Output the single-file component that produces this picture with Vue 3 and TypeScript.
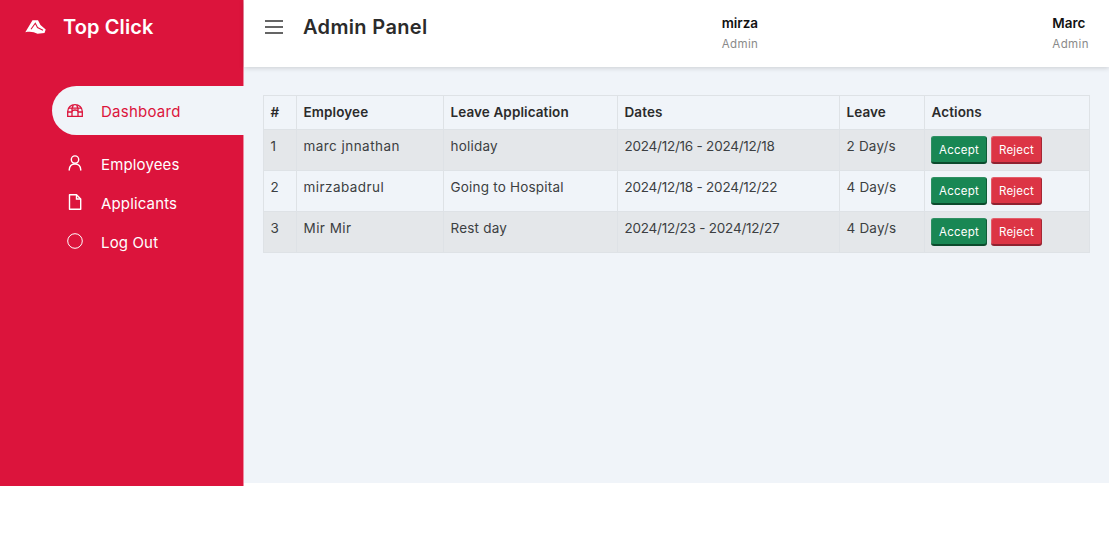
<script setup lang="ts">
type LeaveRow = {
  id: number
  employee: string
  reason: string
  dates: string
  days: string
}

const rows: LeaveRow[] = [
  { id: 1, employee: 'marc jnnathan', reason: 'holiday', dates: '2024/12/16 - 2024/12/18', days: '2 Day/s' },
  { id: 2, employee: 'mirzabadrul', reason: 'Going to Hospital', dates: '2024/12/18 - 2024/12/22', days: '4 Day/s' },
  { id: 3, employee: 'Mir Mir', reason: 'Rest day', dates: '2024/12/23 - 2024/12/27', days: '4 Day/s' }
]
</script>

<template>
  <div class="layout">
    <aside class="sidebar">
      <div class="brand">
        <svg class="brand__logo" viewBox="0 0 21 14" aria-hidden="true">
          <path d="M0.3 12.2L7.5 0.3H13L15.5 5L20.7 9.5L19.5 13L12.5 13.7C9 11.8 5 11.2 0.3 12.2Z" fill="#fff" />
          <path d="M6 9.3L10.3 3.3L12.5 7.5L18 10.2" fill="none" stroke="#dc143c" stroke-width="1.1" />
        </svg>
        <span class="brand__name">Top Click</span>
      </div>

      <nav class="nav">
        <a class="nav__item nav__item--active" href="#">
          <svg class="nav__icon nav__icon--igloo" viewBox="0 0 16 13" fill="none" stroke="currentColor" stroke-width="1.3" aria-hidden="true">
            <path d="M0.7 12.3V7.5C0.7 3.5 4 0.7 8 0.7S15.3 3.5 15.3 7.5V12.3Z" />
            <path d="M0.7 8H5V12.3M15.3 8H11V12.3M2 4.2H14M5.2 4.2L6.2 1M10.8 4.2L9.8 1M5 4.2V8M11 4.2V8M5 8C5 6.6 6.4 6 8 6S11 6.6 11 8" />
          </svg>
          <span>Dashboard</span>
        </a>
        <a class="nav__item" href="#">
          <svg class="nav__icon" viewBox="0 0 16 16" fill="none" stroke="currentColor" stroke-width="1.4" aria-hidden="true">
            <circle cx="8" cy="4.6" r="3.7" />
            <path d="M2.2 15C2.4 11.2 4.6 9 8 9S13.6 11.2 13.8 15" stroke-linecap="round" />
          </svg>
          <span>Employees</span>
        </a>
        <a class="nav__item" href="#">
          <svg class="nav__icon" viewBox="0 0 16 16" fill="none" stroke="currentColor" stroke-width="1.4" aria-hidden="true">
            <path d="M2.5 0.8H9.5L13.7 5V15.2H2.5Z" stroke-linejoin="round" />
            <path d="M9.5 0.8V5H13.7" />
          </svg>
          <span>Applicants</span>
        </a>
        <a class="nav__item" href="#">
          <svg class="nav__icon" viewBox="0 0 16 16" fill="none" stroke="currentColor" stroke-width="1" aria-hidden="true">
            <circle cx="8" cy="8" r="7.3" />
          </svg>
          <span>Log Out</span>
        </a>
      </nav>
    </aside>

    <div class="main">
      <header class="topbar">
        <div class="topbar__left">
          <svg class="topbar__menu" viewBox="0 0 18 14" fill="none" stroke="#333" stroke-width="1.3" aria-hidden="true">
            <path d="M0 1H18M0 7H18M0 13H18" />
          </svg>
          <h1 class="topbar__title">Admin Panel</h1>
        </div>
        <div class="user">
          <div class="user__name">mirza</div>
          <div class="user__role">Admin</div>
        </div>
        <div class="user">
          <div class="user__name">Marc</div>
          <div class="user__role">Admin</div>
        </div>
      </header>

      <section class="content">
        <table class="leaves">
          <thead>
            <tr>
              <th class="col-id">#</th>
              <th class="col-employee">Employee</th>
              <th class="col-reason">Leave Application</th>
              <th class="col-dates">Dates</th>
              <th class="col-days">Leave</th>
              <th>Actions</th>
            </tr>
          </thead>
          <tbody>
            <tr v-for="row in rows" :key="row.id">
              <td>{{ row.id }}</td>
              <td class="cell-employee">{{ row.employee }}</td>
              <td>{{ row.reason }}</td>
              <td class="cell-dates">{{ row.dates }}</td>
              <td>{{ row.days }}</td>
              <td class="actions">
                <button type="button" class="btn btn--accept">Accept</button>
                <button type="button" class="btn btn--reject">Reject</button>
              </td>
            </tr>
          </tbody>
        </table>
      </section>
    </div>
  </div>
</template>

<style scoped>
.layout {
  display: flex;
  align-items: flex-start;
  font-family: Inter, "Noto Sans", sans-serif;
  color: #333;
}

.sidebar {
  flex: 0 0 244px;
  box-sizing: border-box;
  height: 486px;
  background: #dc143c;
  border-right: 1px solid #ee8aa0;
  color: #fff;
}

.brand {
  display: flex;
  align-items: center;
  gap: 17px;
  height: 54px;
  padding-left: 25px;
}

.brand__logo {
  width: 21px;
  height: 14px;
}

.brand__name {
  font-size: 20px;
  font-weight: 600;
  letter-spacing: 0.1px;
}

.nav {
  display: flex;
  flex-direction: column;
  margin-top: 32px;
  padding-left: 52px;
}

.nav__item {
  display: flex;
  align-items: center;
  gap: 18px;
  height: 39.25px;
  padding-left: 15px;
  color: #fff;
  font-size: 15px;
  letter-spacing: 0.15px;
  text-decoration: none;
}

.nav__item--active {
  box-sizing: border-box;
  height: 49px;
  margin: 0 -1px 9.5px 0;
  padding-top: 2px;
  border-radius: 25px 0 0 25px;
  background: #f0f4f9;
  color: #dc143c;
  letter-spacing: 0.25px;
}

.nav__icon {
  flex: none;
  width: 16px;
  height: 16px;
  margin-top: -3px;
}

.nav__icon--igloo {
  height: 13px;
}

.main {
  flex: 1;
  height: 483px;
  min-width: 0;
  background: #f0f4f9;
}

.topbar {
  display: flex;
  align-items: center;
  justify-content: space-between;
  box-sizing: border-box;
  height: 67px;
  padding: 0 20px 0 21px;
  background: #fff;
  box-shadow: 0 1px 5px rgba(0, 0, 0, 0.16);
}

.topbar__left {
  display: flex;
  align-items: center;
  gap: 20px;
}

.topbar__menu {
  width: 18px;
  height: 14px;
  margin-top: -13px;
}

.topbar__title {
  margin: -13px 0 0;
  color: #2b2b2b;
  font-size: 20px;
  font-weight: 600;
  letter-spacing: 0.35px;
}

.user {
  align-self: flex-start;
  padding-top: 15px;
}

.user__name {
  color: #111;
  font-size: 13.5px;
  font-weight: 600;
  line-height: 17px;
}

.user__role {
  margin-top: 4px;
  color: #8a8a8a;
  font-size: 11.5px;
  line-height: 17px;
  letter-spacing: 0.4px;
}

.content {
  padding: 28px 19px 0 19px;
}

.leaves {
  width: 827px;
  table-layout: fixed;
  border-collapse: collapse;
  font-size: 13.5px;
  line-height: 21px;
}

.leaves th,
.leaves td {
  box-sizing: border-box;
  border: 1px solid #dee2e6;
  text-align: left;
  vertical-align: top;
  letter-spacing: 0.2px;
}

.leaves th {
  padding: 6px 6.5px;
  color: #2b2b2b;
  font-weight: 600;
  letter-spacing: 0.1px;
}

.leaves td {
  padding: 6px 6.5px;
  color: #3c3f42;
}

.leaves td.cell-employee {
  letter-spacing: 0.45px;
}

.leaves td.cell-dates {
  letter-spacing: -0.23px;
}

.leaves td.actions {
  padding: 6px 6px 7px;
  font-size: 0;
  line-height: 0;
  white-space: nowrap;
}

.leaves tbody tr:nth-child(odd) td {
  background: #e4e7ea;
}

.col-id {
  width: 33px;
}

.col-employee {
  width: 147px;
}

.col-reason {
  width: 174px;
}

.col-dates {
  width: 222px;
}

.col-days {
  width: 85px;
}

.btn {
  box-sizing: border-box;
  height: 27px;
  padding: 0 6px;
  border: 1px solid transparent;
  border-radius: 3px;
  color: #fff;
  font-family: inherit;
  font-size: 11.5px;
  letter-spacing: 0.2px;
  vertical-align: top;
  cursor: pointer;
}

.btn--accept {
  width: 56px;
  margin-right: 4px;
  background: #198754;
  border-color: #2f8f62 #0f5c38 #0b4a2c #2f8f62;
  box-shadow: 0 1px 0 #0b4a2c;
}

.btn--reject {
  width: 51px;
  background: #dc3545;
  border-color: #e35d6a #a52834 #8e2230 #e35d6a;
  box-shadow: 0 1px 0 #8e2230;
}
</style>

<style>
html,
body {
  background: #fff;
}
</style>
